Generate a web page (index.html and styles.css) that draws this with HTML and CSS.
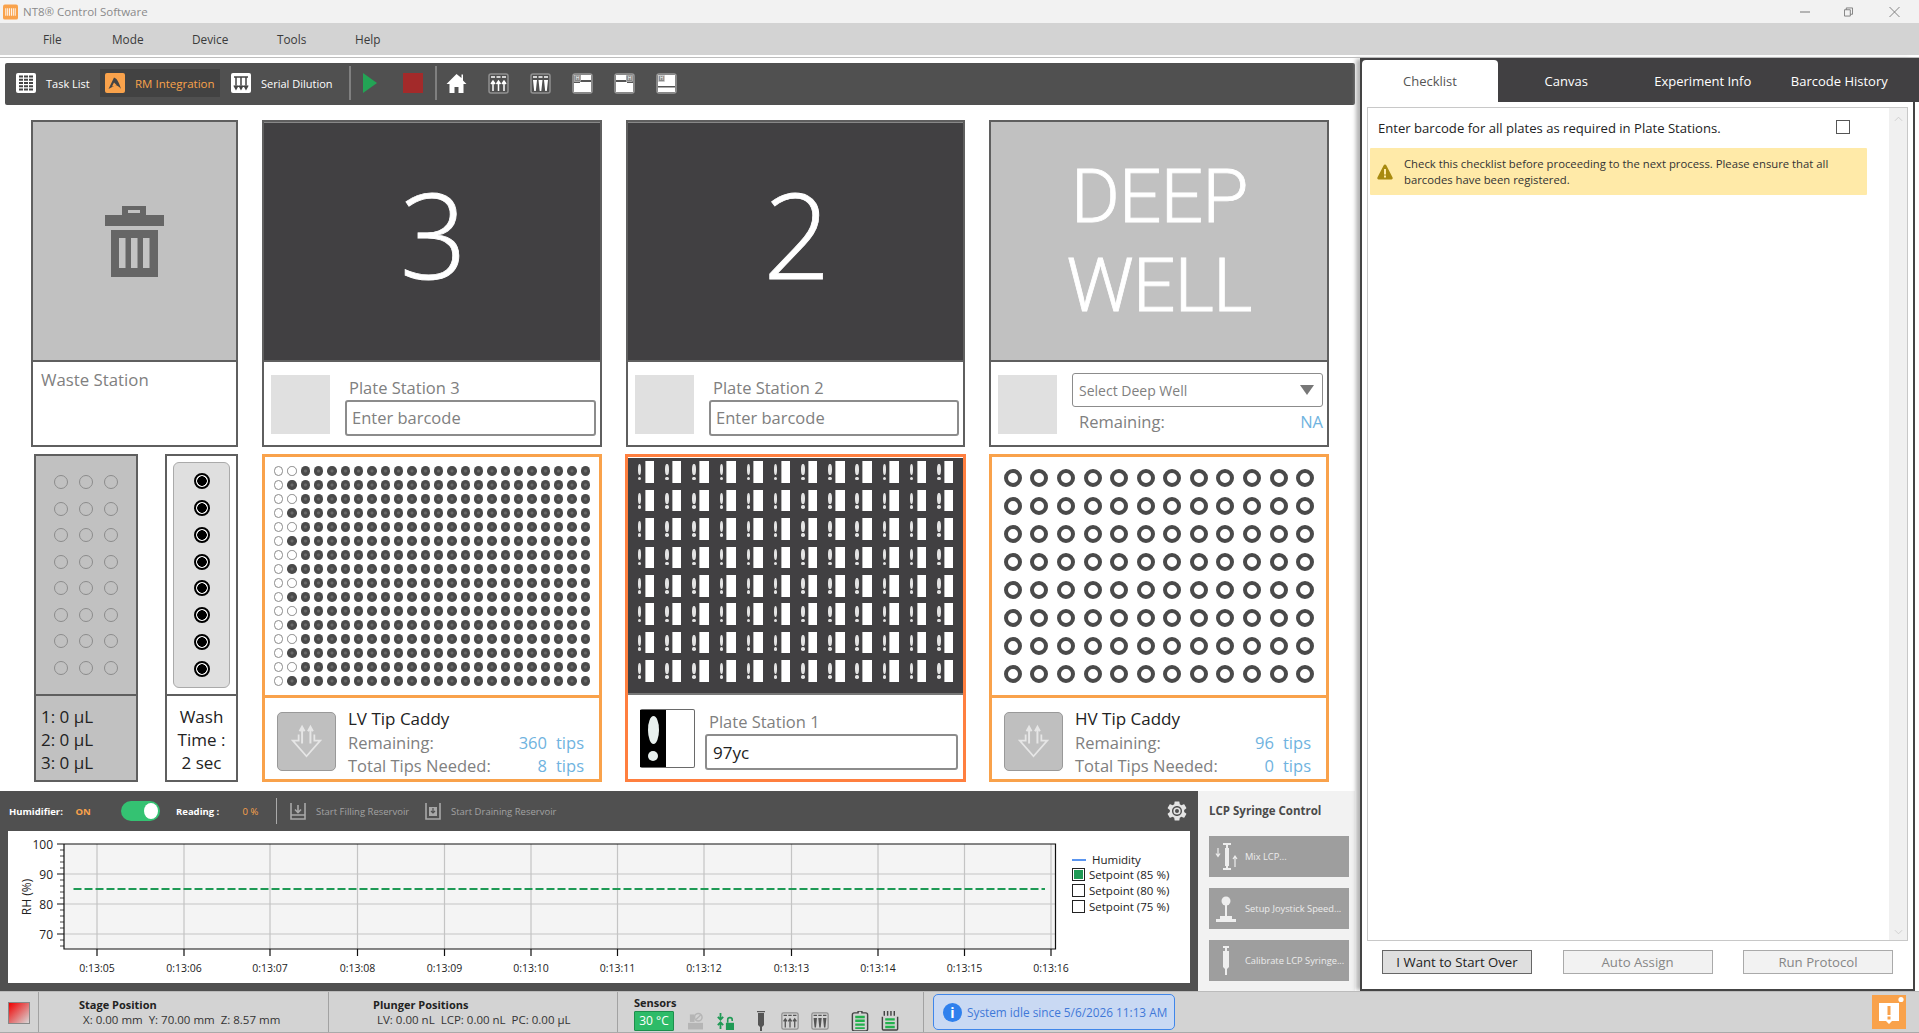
FILE: index.html
```html
<!DOCTYPE html>
<html lang="en">
<head>
    <meta charset="UTF-8">
    <title>NT8 Control Software</title>
    <link rel="stylesheet" href="styles.css">
</head>
<body>
    <!-- icons used more than once -->
    <svg class="sprites">
        <symbol id="i-rack-up" viewBox="0 0 21 21">
            <rect x="1" y="1" width="19" height="19" rx="2" fill="none" stroke="#909090" stroke-width="1.5"/>
            <path d="M3 4h4M8.5 4h4M14 4h4M5 18V8M10.5 18V8M16 18V8M3 11l2-3 2 3M8.500 11l2-3 2 3M14 11l2-3 2 3" fill="none" stroke="currentColor" stroke-width="1.500"/>
        </symbol>
        <symbol id="i-rack-down" viewBox="0 0 21 21">
            <rect x="1" y="1" width="19" height="19" rx="2" fill="none" stroke="#909090" stroke-width="1.5"/>
            <path d="M3 4h4M8.500 4h4M14 4h4" fill="none" stroke="currentColor" stroke-width="1.500"/>
            <path d="M3 7h4l-1.200 11H4.200zM8.500 7h4l-1.200 11H9.700zM14 7h4l-1.200 11h-1.600z" fill="currentColor"/>
        </symbol>
        <symbol id="i-caddy" viewBox="0 0 58 58">
            <path d="M21 22v6H15l14 16 14-16h-6v-6" fill="none" stroke="#e6e6e6" stroke-width="1.800"/>
            <path d="M24.500 31V15M33 31V15M22 18.500l2.500-4.500 2.500 4.500M30.500 18.500l2.500-4.500 2.500 4.500" fill="none" stroke="#e6e6e6" stroke-width="2"/>
        </symbol>
    </svg>

    <header class="titlebar">
        <svg class="app-icon" viewBox="0 0 16 16">
            <rect width="16" height="16" rx="2" fill="#f9a24b"/>
            <path d="M3 4v8M5 4v8M7 4v8M9 4v8M11 4v8M13 4v8" stroke="#fff" stroke-width="1"/>
        </svg>
        <span class="app-name">NT8® Control Software</span>
        <div class="window-btns">
            <svg class="win-min" viewBox="0 0 10 10"><path d="M0 5h10" stroke="#777"/></svg>
            <svg class="win-max" viewBox="0 0 10 10"><path d="M.5 2.500h6.500v7H.5zM2.500 2.500V.5h7v7H7" fill="none" stroke="#777"/></svg>
            <svg class="win-close" viewBox="0 0 10 10"><path d="M0 0l10 10M10 0L0 10" stroke="#777" stroke-width=".9"/></svg>
        </div>
    </header>

    <nav class="menubar">
        <span class="menu-file">File</span>
        <span class="menu-mode">Mode</span>
        <span class="menu-device">Device</span>
        <span class="menu-tools">Tools</span>
        <span class="menu-help">Help</span>
    </nav>

    <main class="workspace">
        <div class="main-col">
            <div class="toolbar">
                <div class="tool-item">
                    <svg class="icon-20" viewBox="0 0 20 20">
                        <rect width="20" height="20" rx="2" fill="#fff"/>
                        <path d="M3 3.500h14M3 6.800h14M3 10h14M3 13.200h14M3 16.500h14" stroke="#444" stroke-width="2" stroke-dasharray="4 1"/>
                    </svg>
                    <span>Task List</span>
                </div>
                <div class="tool-item tool-active">
                    <svg class="icon-20" viewBox="0 0 20 20">
                        <rect width="20" height="20" rx="2" fill="#f9a24b"/>
                        <path d="M3.500 16L9 4.500c2.500 1 4.500 3 7 11.500-2-3-5-4.500-7-3z" fill="#444"/>
                        <path d="M7 13.500l2-4 3 3z" fill="#f9a24b"/>
                    </svg>
                    <span>RM Integration</span>
                </div>
                <div class="tool-item">
                    <svg class="icon-20" viewBox="0 0 20 20">
                        <rect width="20" height="20" rx="2" fill="#fff"/>
                        <path d="M3 4h14M5 4v11M10 4v11M15 4v11M3 12.500l2 3.500 2-3.500M8 12.500l2 3.500 2-3.500M13 12.500l2 3.500 2-3.500" fill="none" stroke="#444" stroke-width="1.500"/>
                    </svg>
                    <span>Serial Dilution</span>
                </div>
                <div class="tool-sep"></div>
                <svg class="icon-play" viewBox="0 0 14 20"><path d="M0 0l14 10L0 20z" fill="#23a455"/></svg>
                <div class="icon-stop"></div>
                <div class="tool-sep"></div>
                <svg class="icon-home" viewBox="0 0 20 20">
                    <path d="M10 1L0 11h3v9h5v-6h4v6h5v-9h3l-3.500-3.500V1.500H15v3.500z" fill="#fff"/>
                </svg>
                <svg class="icon-rack"><use href="#i-rack-up"/></svg>
                <svg class="icon-rack"><use href="#i-rack-down"/></svg>
                <svg class="icon-rack" viewBox="0 0 21 21">
                    <rect x="1" y="1" width="19" height="19" rx="2" fill="#555" stroke="#999" stroke-width="1.500"/>
                    <path d="M9 2h10v5H9zM2 10h6V9h11v10H2z" fill="#fff"/>
                    <rect x="2.500" y="2.500" width="6" height="6" fill="#888" stroke="#ccc" stroke-width=".6"/>
                    <text class="rack-h" x="5.500" y="7.300">H</text>
                </svg>
                <svg class="icon-rack" viewBox="0 0 21 21">
                    <rect x="1" y="1" width="19" height="19" rx="2" fill="#555" stroke="#999" stroke-width="1.500"/>
                    <path d="M2 2h10v5H2zM2 9h11v1h6v9H2z" fill="#fff"/>
                    <rect x="12.500" y="2.500" width="6" height="6" fill="#888" stroke="#ccc" stroke-width=".6"/>
                    <text class="rack-h" x="15.500" y="7.300">H</text>
                </svg>
                <svg class="icon-rack" viewBox="0 0 21 21">
                    <rect x="1" y="1" width="19" height="19" rx="2" fill="#555" stroke="#999" stroke-width="1.500"/>
                    <path d="M2 2h17v11H2zM2 14.500h17V19H2z" fill="#fff"/>
                    <rect x="2.500" y="2.500" width="6" height="6" fill="#888" stroke="#ccc" stroke-width=".6"/>
                    <text class="rack-h" x="5.500" y="7.300">H</text>
                </svg>
            </div>

            <div class="deck">
                <!-- upper row -->
                <section class="card">
                    <div class="card-top top-light">
                        <svg class="trash" viewBox="0 0 59 71">
                            <path d="M17 0h24v9H17zM0 9h59v11H0zM6 24h47v47H6z" fill="#666"/>
                            <path d="M23 4h12v3H23zM14 32h6.500v30H14zM26 32h6.500v30H26zM38 32h6.500v30H38z" fill="#c3c3c3"/>
                        </svg>
                    </div>
                    <div class="waste-label">Waste Station</div>
                </section>

                <section class="card">
                    <div class="card-top top-dark"><span class="big-num">3</span></div>
                    <div class="station-foot">
                        <div class="thumb"></div>
                        <div class="station-fields">
                            <div class="station-name">Plate Station 3</div>
                            <div class="text-box placeholder">Enter barcode</div>
                        </div>
                    </div>
                </section>

                <section class="card">
                    <div class="card-top top-dark"><span class="big-num">2</span></div>
                    <div class="station-foot">
                        <div class="thumb"></div>
                        <div class="station-fields">
                            <div class="station-name">Plate Station 2</div>
                            <div class="text-box placeholder">Enter barcode</div>
                        </div>
                    </div>
                </section>

                <section class="card">
                    <div class="card-top top-light"><span class="deep-text">DEEP<br>WELL</span></div>
                    <div class="station-foot">
                        <div class="thumb"></div>
                        <div class="deep-fields">
                            <div class="select-box">
                                <span>Select Deep Well</span>
                                <i class="select-caret"></i>
                            </div>
                            <div class="deep-remaining">
                                <span>Remaining:</span>
                                <span class="blue">NA</span>
                            </div>
                        </div>
                    </div>
                </section>

                <!-- lower row -->
                <div class="wash-group">
                    <section class="card reservoir">
                        <div class="card-top">
                            <div class="reservoir-grid" data-grid="reservoir"></div>
                        </div>
                        <div class="volumes">
                            <div>1: 0 µL</div>
                            <div>2: 0 µL</div>
                            <div>3: 0 µL</div>
                        </div>
                    </section>
                    <section class="card wash">
                        <div class="card-top">
                            <div class="wash-strip" data-grid="wash"></div>
                        </div>
                        <div class="wash-text">
                            <div>Wash</div>
                            <div>Time :</div>
                            <div>2 sec</div>
                        </div>
                    </section>
                </div>

                <section class="card card-orange">
                    <div class="tips-area">
                        <div class="lv-grid" data-grid="lv"></div>
                    </div>
                    <div class="tip-info">
                        <button class="caddy-btn"><svg><use href="#i-caddy"/></svg></button>
                        <div class="tip-text">
                            <div class="tip-title">LV Tip Caddy</div>
                            <div class="tip-stats">
                                <span>Remaining:</span><span class="blue">360</span><span class="blue">tips</span>
                                <span>Total Tips Needed:</span><span class="blue">8</span><span class="blue">tips</span>
                            </div>
                        </div>
                    </div>
                </section>

                <section class="card card-selected">
                    <div class="plate-area">
                        <div class="plate-grid" data-grid="plate"></div>
                    </div>
                    <div class="station-foot foot-selected">
                        <div class="plate-thumb">
                            <div class="plate-thumb-dark"><i></i><b></b></div>
                        </div>
                        <div class="station-fields">
                            <div class="station-name">Plate Station 1</div>
                            <div class="text-box text-filled">97yc</div>
                        </div>
                    </div>
                </section>

                <section class="card card-orange">
                    <div class="tips-area">
                        <div class="hv-grid" data-grid="hv"></div>
                    </div>
                    <div class="tip-info">
                        <button class="caddy-btn"><svg><use href="#i-caddy"/></svg></button>
                        <div class="tip-text">
                            <div class="tip-title">HV Tip Caddy</div>
                            <div class="tip-stats">
                                <span>Remaining:</span><span class="blue">96</span><span class="blue">tips</span>
                                <span>Total Tips Needed:</span><span class="blue">0</span><span class="blue">tips</span>
                            </div>
                        </div>
                    </div>
                </section>
            </div>

            <div class="lower">
                <div class="humidity">
                    <div class="humidity-bar">
                        <b class="hum-label">Humidifier:</b>
                        <b class="hum-on">ON</b>
                        <div class="toggle"><i></i></div>
                        <b class="hum-reading">Reading :</b>
                        <b class="hum-value">0 %</b>
                        <div class="hum-sep"></div>
                        <svg class="hum-icon" viewBox="0 0 16 18">
                            <path d="M1 1v16h14V1M1 13h14M8 3v7M5 7.500l3 3 3-3" fill="none" stroke="#a8a8a8" stroke-width="1.600"/>
                        </svg>
                        <span class="hum-action">Start Filling Reservoir</span>
                        <svg class="hum-icon" viewBox="0 0 16 18">
                            <path d="M1 1v16h14V1" fill="none" stroke="#a8a8a8" stroke-width="1.600"/>
                            <path d="M4 5h8v9H4z" fill="#a8a8a8"/>
                            <path d="M8 6v5M6 9l2 2 2-2" fill="none" stroke="#505050" stroke-width="1.200"/>
                        </svg>
                        <span class="hum-action">Start Draining Reservoir</span>
                        <svg class="gear" viewBox="2 2 20 20">
                            <path d="M19.140 12.940c.04-.3.06-.61.06-.94 0-.32-.02-.64-.07-.94l2.030-1.580c.18-.14.23-.41.120-.61l-1.920-3.320c-.12-.22-.37-.29-.59-.22l-2.390.96c-.5-.38-1.030-.7-1.620-.94l-.36-2.540c-.04-.24-.24-.41-.48-.41h-3.840c-.24 0-.43.17-.47.41l-.36 2.540c-.59.24-1.130.57-1.620.94l-2.390-.96c-.22-.08-.47 0-.59.22L2.740 8.870c-.12.21-.08.47.12.61l2.030 1.580c-.05.3-.09.63-.09.94s.02.64.07.94l-2.030 1.580c-.18.14-.23.41-.12.61l1.920 3.320c.12.22.37.29.59.22l2.390-.96c.5.38 1.030.7 1.620.94l.36 2.540c.05.24.24.41.48.41h3.840c.24 0 .44-.17.47-.41l.36-2.540c.59-.24 1.130-.56 1.620-.94l2.390.96c.22.08.47 0 .59-.22l1.920-3.320c.12-.22.07-.47-.12-.61l-2.010-1.580zM12 17c-2.760 0-5-2.240-5-5s2.240-5 5-5 5 2.240 5 5-2.240 5-5 5z" fill="#e4e4e4"/>
                            <circle cx="12" cy="12" r="2.800" fill="none" stroke="#e4e4e4" stroke-width="1.600"/>
                        </svg>
                    </div>
                    <div class="chart">
                        <svg class="chart-svg" viewBox="0 0 1182 152">
                            <rect x="56" y="13" width="991.500" height="105" fill="#f4f4f4"/>
                            <path class="grid-line" d="M56 43h991M56 73h991M56 103h991M89 13v105M176 13v105M262 13v105M349.500 13v105M436.500 13v105M523 13v105M609.500 13v105M696 13v105M783.500 13v105M870 13v105M956.500 13v105M1043 13v105"/>
                            <path class="axis-line" d="M56 13h991.500v105H56zM49 13h7M49 43h7M49 73h7M49 103h7M89 118v7M176 118v7M262 118v7M349.500 118v7M436.500 118v7M523 118v7M609.500 118v7M696 118v7M783.500 118v7M870 118v7M956.500 118v7M1043 118v7"/>
                            <path class="axis-minor" d="M52 19h4M52 25h4M52 31h4M52 37h4M52 49h4M52 55h4M52 61h4M52 67h4M52 79h4M52 85h4M52 91h4M52 97h4M52 109h4M52 115h4"/>
                            <path class="setpoint" d="M65.500 58H1037"/>
                            <g class="y-labels">
                                <text x="45" y="18">100</text>
                                <text x="45" y="48">90</text>
                                <text x="45" y="78">80</text>
                                <text x="45" y="108">70</text>
                            </g>
                            <text class="y-title" transform="translate(23 66) rotate(-90)">RH (%)</text>
                            <g class="x-labels">
                                <text x="89" y="141">0:13:05</text>
                                <text x="176" y="141">0:13:06</text>
                                <text x="262" y="141">0:13:07</text>
                                <text x="349.500" y="141">0:13:08</text>
                                <text x="436.500" y="141">0:13:09</text>
                                <text x="523" y="141">0:13:10</text>
                                <text x="609.500" y="141">0:13:11</text>
                                <text x="696" y="141">0:13:12</text>
                                <text x="783.500" y="141">0:13:13</text>
                                <text x="870" y="141">0:13:14</text>
                                <text x="956.500" y="141">0:13:15</text>
                                <text x="1043" y="141">0:13:16</text>
                            </g>
                        </svg>
                        <div class="legend">
                            <div class="legend-row legend-head"><i class="legend-line"></i><span>Humidity</span></div>
                            <div class="legend-row"><i class="legend-box box-on"></i><span>Setpoint (85 %)</span></div>
                            <div class="legend-row"><i class="legend-box"></i><span>Setpoint (80 %)</span></div>
                            <div class="legend-row"><i class="legend-box"></i><span>Setpoint (75 %)</span></div>
                        </div>
                    </div>
                </div>

                <aside class="lcp">
                    <div class="lcp-title">LCP Syringe Control</div>
                    <div class="lcp-btn">
                        <svg viewBox="0 0 24 30">
                            <path d="M9 2h8M9 27h8M13 2v25" stroke="#eee" stroke-width="2" fill="none"/>
                            <path d="M11 6h4v18h-4z" fill="#eee"/>
                            <path d="M4 6v8M2 11.500l2 3 2-3M21 25v-11M19 17l2-3 2 3" stroke="#eee" stroke-width="1.200" fill="none"/>
                        </svg>
                        <span>Mix LCP...</span>
                    </div>
                    <div class="lcp-btn">
                        <svg viewBox="0 0 24 30">
                            <circle cx="12" cy="7" r="4.500" fill="#eee"/>
                            <path d="M11 10h2v13h-2zM6 22h12v3H6zM2 25h20v3H2z" fill="#eee"/>
                        </svg>
                        <span>Setup Joystick Speed...</span>
                    </div>
                    <div class="lcp-btn">
                        <svg viewBox="0 0 24 30">
                            <path d="M9 1h6M12 1v4" stroke="#eee" stroke-width="2" fill="none"/>
                            <path d="M9 5h6v16l-2 2v6h-2v-6l-2-2z" fill="#eee"/>
                        </svg>
                        <span>Calibrate LCP Syringe...</span>
                    </div>
                </aside>
            </div>
        </div>

        <aside class="side">
            <div class="tabs">
                <div class="tab tab-active">Checklist</div>
                <div class="tab">Canvas</div>
                <div class="tab">Experiment Info</div>
                <div class="tab">Barcode History</div>
            </div>
            <div class="checklist">
                <div class="checklist-body">
                    <div class="check-row">
                        <span>Enter barcode for all plates as required in Plate Stations.</span>
                        <i class="check-box"></i>
                    </div>
                    <div class="notice">
                        <svg class="notice-icon" viewBox="0 0 16 16">
                            <path d="M8 .5c.7 0 1.100.4 1.400 1l6.200 12c.4.9-.1 2-1.200 2H1.600c-1.100 0-1.600-1.100-1.200-2l6.200-12c.3-.6.7-1 1.400-1z" fill="#a88a10"/>
                            <path d="M7 5h2v5.500H7zM7 11.500h2v2H7z" fill="#ffeaa8"/>
                        </svg>
                        <p>Check this checklist before proceeding to the next process. Please ensure that all barcodes have been registered.</p>
                    </div>
                </div>
                <div class="scrollbar">
                    <svg viewBox="0 0 10 6"><path d="M1 5l4-4 4 4" fill="none" stroke="#ccc"/></svg>
                    <svg viewBox="0 0 10 6"><path d="M1 1l4 4 4-4" fill="none" stroke="#ccc"/></svg>
                </div>
            </div>
            <div class="side-btns">
                <button class="btn">I Want to Start Over</button>
                <button class="btn btn-off">Auto Assign</button>
                <button class="btn btn-off">Run Protocol</button>
            </div>
        </aside>
    </main>

    <footer class="statusbar">
        <div class="status-led"><i></i></div>
        <div class="status-block stage">
            <b>Stage Position</b>
            <span>X: 0.00 mm&nbsp; Y: 70.00 mm&nbsp; Z: 8.57 mm</span>
        </div>
        <div class="status-block plunger">
            <b>Plunger Positions</b>
            <span>LV: 0.00 nL&nbsp; LCP: 0.00 nL&nbsp; PC: 0.00 µL</span>
        </div>
        <div class="status-block sensors">
            <b>Sensors</b>
            <div class="sensor-row">
                <div class="temp-chip">30 °C</div>
                <svg class="s-plate" viewBox="0 0 16 20">
                    <path d="M0 12h16v7H0z" fill="#b5b5b5"/>
                    <path d="M2 11V3h5v8z" fill="#b5b5b5"/>
                    <circle cx="11" cy="6" r="4" fill="none" stroke="#b5b5b5" stroke-width="1.500"/>
                    <path d="M8.500 8.500l5-5" stroke="#b5b5b5" stroke-width="1.500"/>
                </svg>
                <svg class="s-lock" viewBox="0 0 20 20">
                    <path d="M5 1v7M2 5.500l3 3 3-3M5 19v-7M2 14.500l3-3 3 3" fill="none" stroke="#1f9a55" stroke-width="2"/>
                    <path d="M11 12h9v8h-9z" fill="#1f9a55"/>
                    <path d="M13 12V8.500c0-3 5-3 5 0V10" fill="none" stroke="#1f9a55" stroke-width="1.800"/>
                </svg>
                <svg class="s-syringe" viewBox="0 0 10 20">
                    <path d="M1 .5h8" stroke="#555" stroke-width="1.500"/>
                    <path d="M2 2h6v12l-2 2v4H4v-4l-2-2z" fill="#555"/>
                </svg>
                <svg class="s-rack"><use href="#i-rack-up"/></svg>
                <svg class="s-rack s-rack-last"><use href="#i-rack-down"/></svg>
                <svg class="s-batt" viewBox="0 0 18 21">
                    <path d="M3 2h4V0h4v2h4q2 0 2 2v15q0 2-2 2H3q-2 0-2-2V4q0-2 2-2z" fill="none" stroke="#444" stroke-width="1.500"/>
                    <path d="M4 5h10v2.500H4zM4 9h10v2.500H4zM4 13h10v2.500H4zM4 17h10v2H4z" fill="#22b14c"/>
                </svg>
                <svg class="s-batt" viewBox="0 0 18 21">
                    <path d="M3 0v5M6.500 0v5M10 0v5M13.500 0v5M1 6v13q0 1 1 1h14q1 0 1-1V6" fill="none" stroke="#444" stroke-width="1.500"/>
                    <path d="M4 7.500h10V10H4zM4 11.500h10V14H4zM4 15.500h10V18H4z" fill="#22b14c"/>
                </svg>
            </div>
        </div>
        <div class="status-msg-wrap">
            <div class="status-msg">
                <i class="info-dot">i</i>
                <span>System idle since 5/6/2026 11:13 AM</span>
            </div>
        </div>
        <div class="alert-btn">
            <svg viewBox="0 0 34 34">
                <path d="M7 8h20v18h-7l-3 3-3-3H7z" fill="#fff"/>
                <path d="M15.500 11h3v9h-3zM15.500 21.500h3v3h-3z" fill="#f9a24b"/>
                <circle cx="29" cy="4.500" r="2.600" fill="#fff"/>
            </svg>
        </div>
    </footer>

    <script src="script.js"></script>
</body>
</html>
```

FILE: styles.css
```css
* {
    box-sizing: border-box;
}

body {
    margin: 0;
    width: 1919px;
    height: 1033px;
    overflow: hidden;
    display: flex;
    flex-direction: column;
    background-color: #fff;
    font-family: "Open Sans", "Noto Sans", sans-serif;
    color: #333;
}

.sprites {
    display: none;
}

/* Title and menu */
.titlebar {
    height: 23px;
    display: flex;
    align-items: center;
    padding-left: 3px;
    background-color: #f2f2f2;
}

.app-icon {
    width: 15px;
    height: 16px;
}

.app-name {
    margin-left: 5px;
    font-size: 11.500px;
    color: #8a8a8a;
}

.window-btns {
    margin-left: auto;
    display: flex;
    align-items: center;
    padding-right: 19px;
}

.win-min {
    width: 10px;
    height: 10px;
    margin-right: 34px;
}

.win-max {
    width: 9px;
    height: 10px;
    margin-right: 36px;
}

.win-close {
    width: 11px;
    height: 10px;
}

.menubar {
    height: 32px;
    flex-shrink: 0;
    display: flex;
    align-items: center;
    padding-left: 43px;
    background-color: #d3d3d3;
    font-size: 11.800px;
    color: #3a3a3a;
}

.menu-file { width: 69px; }
.menu-mode { width: 80px; }
.menu-device { width: 85px; }
.menu-tools { width: 78px; }

.workspace {
    flex: 1;
    min-height: 0;
    display: flex;
    margin-top: 2px;
    border-top: 1px solid #bdbdbd;
}

/* Left column */
.main-col {
    width: 1360px;
    flex-shrink: 0;
    display: flex;
    flex-direction: column;
    padding-top: 5px;
}

.toolbar {
    height: 42px;
    width: 1350px;
    margin-left: 5px;
    flex-shrink: 0;
    display: flex;
    align-items: center;
    padding: 0 0 2px 11px;
    background-color: #505050;
    border-radius: 2px;
    color: #fff;
}

.tool-item {
    display: flex;
    align-items: center;
    height: 28px;
    font-size: 11px;
    gap: 10px;
}

.tool-item:first-child {
    width: 84px;
}

.tool-active {
    width: 120px;
    padding-left: 5px;
    background-color: #424242;
    font-size: 11.500px;
    color: #f9a24b;
    white-space: nowrap;
}

.tool-item:nth-child(3) {
    margin-left: 11px;
    width: 112px;
    white-space: nowrap;
}

.icon-20 {
    width: 20px;
    height: 20px;
    flex-shrink: 0;
}

.tool-sep {
    width: 2px;
    height: 34px;
    margin-left: 6px;
    background-color: #808080;
}

.icon-play {
    width: 14px;
    height: 20px;
    margin-left: 12px;
}

.icon-stop {
    width: 20px;
    height: 20px;
    margin: 0 6px 0 26px;
    background-color: #a32a2a;
}

.icon-home {
    width: 21px;
    height: 20px;
    margin-left: 9px;
    margin-right: 21px;
}

.icon-rack {
    width: 21px;
    height: 21px;
    margin-right: 21px;
    color: #fff;
}

.rack-h {
    font-size: 5px;
    text-anchor: middle;
    fill: #fff;
}

/* Deck of stations */
.deck {
    display: grid;
    grid-template-columns: 207px 340px 339px 340px;
    grid-template-rows: 327px 328px;
    column-gap: 24px;
    row-gap: 7px;
    margin: 15px 0 0 31px;
}

.card {
    display: flex;
    flex-direction: column;
    border: 2px solid #5f5f5f;
    background-color: #fff;
    min-width: 0;
}

.card-top {
    height: 240px;
    flex-shrink: 0;
    display: flex;
    align-items: center;
    justify-content: center;
    border-bottom: 2px solid #5f5f5f;
}

.top-light {
    background-color: #c1c1c1;
}

.top-dark {
    background-color: #414042;
    border-top: 1px solid #888;
}

.trash {
    width: 59px;
    height: 71px;
}

.big-num {
    margin: 0 0 16px 3px;
    font-size: 118px;
    font-weight: 300;
    line-height: 1;
    color: #fff;
    -webkit-text-stroke: .8px #fff;
}

.deep-text {
    font-family: Roboto, "Open Sans", sans-serif;
    font-size: 75px;
    font-weight: 300;
    line-height: 89px;
    letter-spacing: -1px;
    text-align: center;
    color: #fff;
    -webkit-text-stroke: .8px #fff;
}

.waste-label {
    padding: 6px 0 0 8px;
    font-size: 16.800px;
    color: #808080;
}

.station-foot {
    display: flex;
    padding: 13px 4px 0 7px;
    gap: 15px;
}

.thumb {
    width: 59px;
    height: 59px;
    flex-shrink: 0;
    background-color: #e0e0e0;
}

.station-fields {
    flex: 1;
    min-width: 0;
}

.station-name {
    height: 25px;
    line-height: 25px;
    padding-left: 4px;
    font-size: 16.500px;
    color: #808080;
}

.text-box {
    height: 36px;
    line-height: 32px;
    padding-left: 5px;
    border: 2px solid #8c8c8c;
    border-radius: 3px;
    font-size: 16.500px;
    color: #222;
}

.text-filled {
    padding: 1px 0 0 6px;
    font-size: 17px;
}

.placeholder {
    color: #808080;
}

.deep-fields {
    flex: 1;
    min-width: 0;
    margin-top: -2px;
}

.select-box {
    height: 34px;
    display: flex;
    align-items: center;
    justify-content: space-between;
    padding: 0 8px 0 6px;
    border: 1px solid #8c8c8c;
    border-radius: 3px;
    font-size: 14px;
    color: #808080;
}

.select-caret {
    width: 0;
    height: 0;
    border-left: 7px solid transparent;
    border-right: 7px solid transparent;
    border-top: 10px solid #777;
}

.deep-remaining {
    display: flex;
    justify-content: space-between;
    padding-left: 7px;
    margin-top: 3px;
    font-size: 16.500px;
    line-height: 24px;
    color: #808080;
}

.blue {
    color: #6fb3e0;
}

/* Lower row */
.wash-group {
    display: flex;
    justify-content: space-between;
    padding-left: 3px;
}

.reservoir {
    width: 104px;
    background-color: #c1c1c1;
}

.wash {
    width: 73px;
}

.reservoir-grid {
    display: grid;
    grid-template-columns: repeat(3, 25px);
    grid-auto-rows: 26.500px;
    place-items: center;
}

.reservoir-grid i {
    width: 14px;
    height: 14px;
    border: 1.500px solid #8c8c8c;
    border-radius: 50%;
}

.wash-strip {
    width: 57px;
    height: 226px;
    display: grid;
    grid-auto-rows: 26.900px;
    align-content: center;
    place-items: center;
    border: 1px solid #aaa;
    border-radius: 6px;
    background-color: #dfdfdf;
}

.wash-strip i {
    width: 16px;
    height: 16px;
    border: 2px solid #000;
    border-radius: 50%;
    background: radial-gradient(circle, #000 0 4.500px, #fff 5px);
}

.volumes,
.wash-text {
    padding-top: 9px;
    font-size: 17px;
    line-height: 23px;
    color: #222;
}

.volumes {
    padding-left: 5px;
}

.wash-text {
    text-align: center;
}

.card-orange {
    border: 3px solid #f9a24b;
}

.card-selected {
    margin: 0 -1px;
    border: 3px solid #ff7f3f;
}

.tips-area {
    height: 241px;
    flex-shrink: 0;
    display: flex;
    align-items: center;
    justify-content: center;
    border-bottom: 3px solid #f9a24b;
}

.lv-grid {
    display: grid;
    grid-template-columns: repeat(24, 13.330px);
    grid-auto-rows: 14px;
    place-items: center;
}

.lv-grid i {
    width: 9.500px;
    height: 9.500px;
    border-radius: 50%;
    background: radial-gradient(circle, #6a6a6a 0 1px, #4a4a4a 2px);
}

.lv-grid i.empty {
    background: #fff;
    border: 1px solid #8a8a8a;
}

.hv-grid {
    display: grid;
    grid-template-columns: repeat(12, 26.600px);
    grid-auto-rows: 28px;
    place-items: center;
}

.hv-grid i {
    width: 18px;
    height: 18px;
    border: 4px solid #4a4a4a;
    border-radius: 50%;
}

.tip-info {
    display: flex;
    padding: 10px 0 0 12px;
}

.caddy-btn {
    width: 59px;
    height: 59px;
    padding: 0;
    margin-top: 4px;
    flex-shrink: 0;
    border: 1px solid #999;
    border-radius: 5px;
    background-color: #bfbfbf;
}

.caddy-btn svg {
    display: block;
    width: 57px;
    height: 57px;
}

.tip-text {
    flex: 1;
    margin: -2.500px 15px 0 12px;
}

.tip-title {
    font-size: 17px;
    line-height: 25px;
    color: #222;
}

.tip-stats {
    display: grid;
    grid-template-columns: 1fr auto auto;
    column-gap: 9px;
    font-size: 16.500px;
    line-height: 23.500px;
    color: #808080;
}

.tip-stats span:nth-child(3n + 2) {
    text-align: right;
}

.plate-area {
    height: 237px;
    flex-shrink: 0;
    display: flex;
    justify-content: center;
    background-color: #414042;
    border-bottom: 2px solid #777;
    margin: 1px 0 0;
}

.plate-grid {
    display: grid;
    grid-template-columns: repeat(12, 27.200px);
    grid-auto-rows: 28.400px;
    place-items: center;
}

.well {
    display: flex;
    align-items: center;
    gap: 3px;
}

.well-mark {
    width: 4px;
    display: flex;
    flex-direction: column;
    align-items: center;
    gap: 1.500px;
}

.well-mark::before {
    content: "";
    width: 3.500px;
    height: 11px;
    border-radius: 50%;
    background-color: #e4e4e4;
}

.well-mark::after {
    content: "";
    width: 3.500px;
    height: 3.500px;
    border-radius: 50%;
    background-color: #e4e4e4;
}

.well-slot {
    width: 9.500px;
    height: 21.500px;
    background-color: #fff;
    border-left: 1px solid #b5b5b5;
}

.foot-selected {
    padding: 14px 5px 0 12px;
    gap: 10px;
}

.plate-thumb {
    width: 55px;
    height: 59px;
    flex-shrink: 0;
    display: flex;
    justify-content: flex-start;
    background-color: #fff;
    border: 1px solid #6a6a6a;
    border-left: 0;
    border-radius: 2px;
}

.plate-thumb-dark {
    width: 26px;
    display: flex;
    flex-direction: column;
    align-items: center;
    justify-content: center;
    gap: 7px;
    background-color: #000;
}

.plate-thumb-dark i {
    width: 11px;
    height: 28px;
    border-radius: 50%;
    background-color: #e8f0ee;
}

.plate-thumb-dark b {
    width: 10px;
    height: 10px;
    border-radius: 50%;
    background-color: #e8f0ee;
}

/* Humidity panel */
.lower {
    display: flex;
    margin-top: 9px;
    height: 200px;
}

.humidity {
    width: 1198px;
    display: flex;
    flex-direction: column;
    background-color: #505050;
}

.humidity-bar {
    height: 40px;
    flex-shrink: 0;
    display: flex;
    align-items: center;
    padding: 0 11px 0 9px;
    font-size: 9.500px;
    color: #fff;
}

.hum-label {
    width: 66.500px;
}

.hum-on {
    width: 45.500px;
    color: #f9a24b;
}

.toggle {
    width: 39px;
    height: 20px;
    margin-right: 16px;
    display: flex;
    justify-content: flex-end;
    align-items: center;
    padding-right: 2px;
    border-radius: 10px;
    background-color: #34c272;
}

.toggle i {
    width: 14px;
    height: 16px;
    border-radius: 50%;
    background-color: #fff;
}

.hum-reading {
    width: 66.500px;
}

.hum-value {
    width: 33.500px;
    color: #f9a24b;
    font-weight: 400;
}

.hum-sep {
    width: 1px;
    height: 26px;
    margin-right: 13px;
    background-color: #aaa;
}

.hum-icon {
    width: 16px;
    height: 18px;
    margin-right: 10px;
    flex-shrink: 0;
}

.hum-action {
    width: 109px;
    white-space: nowrap;
    font-size: 9.500px;
    color: #a2a2a2;
}

.gear {
    width: 20px;
    height: 20px;
    margin-left: auto;
}

.chart {
    height: 152px;
    margin-left: 8px;
    width: 1182px;
    position: relative;
    background-color: #fff;
}

.chart-svg {
    display: block;
    width: 1182px;
    height: 152px;
    font-size: 10.500px;
    fill: #222;
}

.grid-line {
    fill: none;
    stroke: #c4c4c4;
    stroke-width: 1.200;
}

.axis-line {
    fill: none;
    stroke: #111;
    stroke-width: 1.200;
}

.axis-minor {
    stroke: #111;
    stroke-width: .8;
}

.setpoint {
    stroke: #1f9a55;
    stroke-width: 1.800;
    stroke-dasharray: 8 3;
}

.y-labels text {
    text-anchor: end;
    font-size: 12px;
}

.x-labels text {
    text-anchor: middle;
}

.y-title {
    text-anchor: middle;
    font-size: 12px;
}

/* the legend sits on the chart's free corner */
.legend {
    position: absolute;
    left: 1064px;
    top: 22px;
    font-size: 11.500px;
    color: #222;
}

.legend-row {
    display: flex;
    align-items: center;
    height: 16px;
    gap: 5px;
}

.legend-head {
    height: 13px;
}

.legend-line {
    width: 14px;
    height: 2px;
    margin-right: 1px;
    background-color: #5a95ef;
}

.legend-box {
    width: 13px;
    height: 13px;
    margin-right: -1px;
    border: 1px solid #222;
    background-color: #fff;
}

.box-on {
    background-color: #1f9a55;
    box-shadow: inset 0 0 0 1px #fff;
}

.lcp {
    width: 157px;
    padding: 0 6px 0 11px;
    background-color: #f2f2f2;
}

.lcp-title {
    height: 45px;
    padding-top: 12px;
    font-size: 11.500px;
    font-weight: 700;
    white-space: nowrap;
    color: #4a4a4a;
}

.lcp-btn {
    height: 41px;
    margin-bottom: 11px;
    display: flex;
    align-items: center;
    gap: 7px;
    padding-left: 5px;
    background-color: #9e9e9e;
    font-size: 9.300px;
    white-space: nowrap;
    color: #ececec;
}

.lcp-btn svg {
    width: 24px;
    height: 30px;
    flex-shrink: 0;
}

/* Right panel */
.side {
    width: 555px;
    margin-left: 0;
    display: flex;
    flex-direction: column;
    border: 2px solid #444;
    border-top: 0;
    box-shadow: -5px 0 4px -1px #b5b5b5;
    background-color: #fff;
}

.tabs {
    height: 44px;
    margin-right: -6px;
    flex-shrink: 0;
    display: flex;
    padding-top: 2px;
    background-color: #414042;
    font-size: 13px;
    color: #fff;
}

.tab {
    width: 136.500px;
    display: flex;
    align-items: center;
    justify-content: center;
    white-space: nowrap;
}

.tab-active {
    width: 136px;
    background-color: #fff;
    color: #555;
    border-radius: 4px 4px 0 0;
}

.checklist {
    flex: 1;
    min-height: 0;
    display: flex;
    margin: 5px 5px 0;
    border: 1px solid #c8c8c8;
}

.checklist-body {
    flex: 1;
    padding: 0 0 0 2px;
}

.check-row {
    height: 40px;
    display: flex;
    align-items: center;
    justify-content: space-between;
    padding: 0 39px 0 8px;
    font-size: 13.100px;
    color: #222;
}

.check-box {
    width: 14px;
    height: 14px;
    margin-top: -3px;
    border: 1px solid #555;
    background-color: #fff;
}

.notice {
    width: 497px;
    height: 47px;
    display: flex;
    align-items: center;
    gap: 11px;
    padding-left: 7px;
    background-color: #ffeaa8;
    border-radius: 1px;
}

.notice-icon {
    width: 16px;
    height: 16px;
    flex-shrink: 0;
}

.notice p {
    margin: 0;
    width: 445px;
    font-size: 11.300px;
    line-height: 16px;
    color: #333;
}

.scrollbar {
    width: 18px;
    flex-shrink: 0;
    display: flex;
    flex-direction: column;
    justify-content: space-between;
    align-items: center;
    padding: 8px 0 5px;
    background-color: #f0f0f0;
}

.scrollbar svg {
    width: 9px;
    height: 6px;
}

.side-btns {
    height: 48px;
    flex-shrink: 0;
    display: flex;
    justify-content: space-between;
    align-items: flex-start;
    padding: 9px 20px 0 20px;
}

.btn {
    width: 150px;
    height: 24px;
    padding: 0;
    border: 1px solid #666;
    background-color: #dfdfdf;
    font-family: inherit;
    font-size: 13.200px;
    color: #222;
}

.btn-off {
    border-color: #aaa;
    background-color: #f2f2f2;
    color: #868686;
}

/* Status bar */
.statusbar {
    height: 42px;
    flex-shrink: 0;
    display: flex;
    background-color: #d3d3d3;
    border-top: 1px solid #bbb;
    border-bottom: 1px solid #a9a9a9;
    font-size: 11.500px;
    color: #333;
}

.status-led {
    width: 39px;
    padding: 10px 0 0 8px;
    border-right: 1px solid #a2a2a2;
}

.status-led i {
    display: block;
    width: 22px;
    height: 22px;
    border: 1px solid #888;
    background: linear-gradient(135deg, #f00000, #d8d8d8);
}

.status-block {
    display: flex;
    flex-direction: column;
    border-right: 1px solid #a2a2a2;
}

.status-block b {
    height: 16px;
    line-height: 16px;
    margin-top: 5px;
    font-size: 11px;
    color: #222;
}

.status-block span {
    margin-top: -1px;
    padding-left: 4px;
    line-height: 16px;
    white-space: nowrap;
}

.stage {
    width: 290px;
    padding-left: 40px;
}

.plunger {
    width: 289px;
    padding-left: 44px;
}

.sensors {
    width: 306px;
    padding-left: 16px;
}

.sensors b {
    margin-top: 3px;
    height: 15px;
}

.sensor-row {
    display: flex;
    align-items: center;
}

.temp-chip {
    width: 40px;
    height: 20px;
    line-height: 18px;
    text-align: center;
    margin-top: 1px;
    border: 1px solid #1d8f4d;
    background-color: #2dbb68;
    border-radius: 1px;
    font-size: 12px;
    white-space: nowrap;
    color: #fff;
}

.sensor-row svg {
    height: 20px;
    margin-top: 1px;
}

.s-plate {
    width: 15px;
    margin: 0 13px 0 14px;
}

.s-lock {
    width: 18px;
    margin-right: 22px;
}

.s-syringe {
    width: 10px;
    margin-right: 15px;
}

.s-rack {
    width: 18px;
    margin-right: 12px;
    color: #555;
}

.s-rack-last {
    margin-right: 22px;
}

.s-batt {
    width: 18px;
    margin-right: 12px;
}

.status-msg-wrap {
    padding: 2px 0 0 9px;
}

.status-msg {
    width: 242px;
    height: 36px;
    display: flex;
    align-items: center;
    gap: 5px;
    padding-left: 9px;
    border: 1px solid #3f86ea;
    border-radius: 5px;
    background-color: #c9d9f3;
    font-size: 11.800px;
    white-space: nowrap;
    color: #3f78d8;
}

.info-dot {
    width: 19px;
    height: 19px;
    flex-shrink: 0;
    border-radius: 50%;
    background-color: #2f80ed;
    color: #fff;
    font-style: normal;
    font-weight: 700;
    font-size: 14px;
    line-height: 19px;
    text-align: center;
}

.alert-btn {
    width: 34px;
    height: 34px;
    margin: 3px 13px 0 auto;
    background-color: #f9a24b;
}

.alert-btn svg {
    display: block;
    width: 34px;
    height: 34px;
}
```

FILE: script.js
```js
// fills the plate and tip grids
function fill(name, count, build) {
    var box = document.querySelector('[data-grid="' + name + '"]');
    for (var n = 0; n < count; n++) {
        box.appendChild(build(n));
    }
}

function dot(cls) {
    var el = document.createElement('i');
    if (cls) el.className = cls;
    return el;
}

fill('reservoir', 24, function () { return dot(); });
fill('wash', 8, function () { return dot(); });
fill('hv', 96, function () { return dot(); });

// LV caddy: first column is used up, second column on every other row
fill('lv', 384, function (n) {
    var col = n % 24;
    var row = Math.floor(n / 24);
    var used = col === 0 || (col === 1 && row % 2 === 0);
    return dot(used ? 'empty' : '');
});

fill('plate', 96, function () {
    var well = document.createElement('div');
    well.className = 'well';
    well.innerHTML = '<span class="well-mark"></span><span class="well-slot"></span>';
    return well;
});
```
